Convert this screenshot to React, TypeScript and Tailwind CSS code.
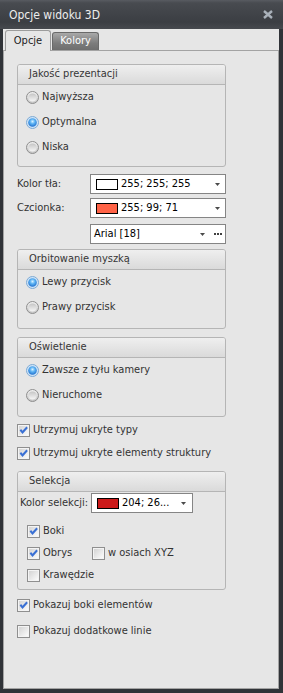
import React, { useId } from "react";

function Radio({ checked }: { checked?: boolean }) {
  const id = useId().replace(/:/g, "");
  if (checked) {
    return (
      <svg width="13" height="13" viewBox="0 0 13 13" className="shrink-0">
        <defs>
          <radialGradient id={`rb${id}`} cx="50%" cy="38%" r="60%">
            <stop offset="0%" stopColor="#d8f1ff" />
            <stop offset="45%" stopColor="#5db3f3" />
            <stop offset="100%" stopColor="#2473d0" />
          </radialGradient>
        </defs>
        <circle cx="6.5" cy="6.5" r="6" fill="#cfe5f8" stroke="#7ea9d3" />
        <circle cx="6.5" cy="6.5" r="4.3" fill={`url(#rb${id})`} />
      </svg>
    );
  }
  return (
    <svg width="13" height="13" viewBox="0 0 13 13" className="shrink-0">
      <defs>
        <linearGradient id={`ro${id}`} x1="0" y1="0" x2="0" y2="1">
          <stop offset="0%" stopColor="#f2f2f2" />
          <stop offset="100%" stopColor="#c4c4c4" />
        </linearGradient>
        <linearGradient id={`ri${id}`} x1="0" y1="0" x2="0" y2="1">
          <stop offset="0%" stopColor="#c6c6c6" />
          <stop offset="100%" stopColor="#f6f6f6" />
        </linearGradient>
      </defs>
      <circle cx="6.5" cy="6.5" r="6" fill={`url(#ro${id})`} stroke="#8e8e8e" />
      <circle cx="6.5" cy="6.5" r="4" fill={`url(#ri${id})`} />
    </svg>
  );
}

function Check({ checked }: { checked?: boolean }) {
  const id = useId().replace(/:/g, "");
  return (
    <svg width="13" height="13" viewBox="0 0 13 13" className="shrink-0">
      <defs>
        <linearGradient id={`cb${id}`} x1="0" y1="0" x2="1" y2="1">
          <stop offset="0%" stopColor="#d4d4d4" />
          <stop offset="100%" stopColor="#fbfbfb" />
        </linearGradient>
      </defs>
      <rect x="0.5" y="0.5" width="12" height="12" fill="#f4f4f4" stroke="#8f8f8f" />
      <rect x="2" y="2" width="9" height="9" fill={`url(#cb${id})`} />
      {checked && (
        <path d="M2.6 6.4 L4.1 5 L5.5 6.7 L9.4 2.6 L10.9 4 L5.5 9.9 Z" fill="#3a70d4" />
      )}
    </svg>
  );
}

function Arrow() {
  return (
    <svg width="5" height="3" viewBox="0 0 5 3" className="shrink-0">
      <polygon points="0,0 5,0 2.5,3" fill="#4a4a4a" />
    </svg>
  );
}

function Group({
  title,
  bodyClass,
  children,
  className,
}: {
  title: string;
  bodyClass: string;
  children: React.ReactNode;
  className: string;
}) {
  return (
    <div className={`ml-[13px] w-[209px] border border-[#b5b5b5] rounded-[3px] ${className}`}>
      <div className="h-[20px] border-b border-[#b5b5b5] rounded-t-[2px] bg-[linear-gradient(#efefef,#dadada)] flex items-center pl-[11px] text-[#363636]">
        {title}
      </div>
      <div className={bodyClass}>{children}</div>
    </div>
  );
}

function RadioRow({ label, checked, h }: { label: string; checked?: boolean; h: string }) {
  return (
    <div className={`flex items-center pl-[8px] gap-[3px] ${h}`}>
      <Radio checked={checked} />
      <span>{label}</span>
    </div>
  );
}

export default function App() {
  return (
    <div className="w-[283px] h-[693px] bg-[#303338] flex flex-col font-['DejaVu_Sans_Condensed','DejaVu_Sans','Liberation_Sans',sans-serif] text-[11px] text-[#333333] overflow-hidden">
      <div className="h-[29px] shrink-0 flex items-center justify-between pl-[9px] pr-[10px] bg-[linear-gradient(#585b61_0px,#484b50_3px,#3b3e43_22px,#46494e_29px)]">
        <span className="text-[12px] text-[#ededed]">Opcje widoku 3D</span>
        <svg width="10" height="9" viewBox="0 0 10 9">
          <path d="M1 1 L9 8 M9 1 L1 8" stroke="#a9b1ba" strokeWidth="2.4" />
        </svg>
      </div>
      <div className="flex-1 ml-[3px] mr-[4px] mb-[4px] bg-[#e6e6e6] flex flex-col">
        <div className="h-[21px] shrink-0 flex items-end pl-[2px] gap-[1px]">
          <div className="relative z-10 -mb-px h-[21px] w-[46px] border border-b-0 border-[#9c9c9c] rounded-t-[3px] bg-[#e6e6e6] flex items-center justify-center text-[#222]">
            Opcje
          </div>
          <div className="h-[18px] w-[47px] border border-b-0 border-[#6a6a6a] rounded-t-[3px] bg-[linear-gradient(#a9a9a9,#7c7c7c_60%,#6e6e6e)] flex items-center justify-center text-white">
            Kolory
          </div>
        </div>
        <div className="flex-1 border border-[#a3a3a3] flex flex-col">
          <Group title="Jakość prezentacji" className="mt-[13px]" bodyClass="pb-[6px]">
            <RadioRow label="Najwyższa" h="h-[25px]" />
            <RadioRow label="Optymalna" checked h="h-[25px]" />
            <RadioRow label="Niska" h="h-[25px]" />
          </Group>

          <div className="mt-[7px] ml-[13px] flex items-center h-[20px]">
            <span className="w-[73px]">Kolor tła:</span>
            <div className="w-[136px] h-[20px] border border-[#858585] bg-white flex items-center pl-[5px] pr-[5px]">
              <span className="w-[22px] h-[11px] border border-black bg-white shrink-0" />
              <span className="ml-[3px] flex-1 text-black">255; 255; 255</span>
              <Arrow />
            </div>
          </div>
          <div className="mt-[4px] ml-[13px] flex items-center h-[20px]">
            <span className="w-[73px]">Czcionka:</span>
            <div className="w-[136px] h-[20px] border border-[#858585] bg-white flex items-center pl-[5px] pr-[5px]">
              <span className="w-[22px] h-[11px] border border-black bg-[#ff6347] shrink-0" />
              <span className="ml-[3px] flex-1 text-black">255; 99; 71</span>
              <Arrow />
            </div>
          </div>
          <div className="mt-[6px] ml-[86px] w-[136px] h-[20px] border border-[#858585] bg-white flex items-center pl-[3px] pr-[3px]">
            <span className="flex-1 text-black">Arial [18]</span>
            <Arrow />
            <div className="ml-[9px] flex gap-[1px]">
              <span className="w-[2px] h-[2px] bg-[#404040]" />
              <span className="w-[2px] h-[2px] bg-[#404040]" />
              <span className="w-[2px] h-[2px] bg-[#404040]" />
            </div>
          </div>

          <Group title="Orbitowanie myszką" className="mt-[5px]" bodyClass="pb-[8px]">
            <RadioRow label="Lewy przycisk" checked h="h-[25px]" />
            <RadioRow label="Prawy przycisk" h="h-[25px]" />
          </Group>

          <Group title="Oświetlenie" className="mt-[8px]" bodyClass="pb-[8px]">
            <RadioRow label="Zawsze z tyłu kamery" checked h="h-[25px]" />
            <RadioRow label="Nieruchome" h="h-[25px]" />
          </Group>

          <div className="mt-[2px] ml-[13px] h-[23px] flex items-center gap-[3px]">
            <Check checked />
            <span>Utrzymuj ukryte typy</span>
          </div>
          <div className="ml-[13px] h-[23px] flex items-center gap-[3px]">
            <Check checked />
            <span>Utrzymuj ukryte elementy struktury</span>
          </div>

          <Group title="Selekcja" className="mt-[6px]" bodyClass="pt-[1px] pb-[3px]">
            <div className="flex items-center h-[20px] pl-[2px]">
              <span className="w-[71px]">Kolor selekcji:</span>
              <div className="w-[102px] h-[20px] border border-[#858585] bg-white flex items-center pl-[5px] pr-[6px]">
                <span className="w-[22px] h-[11px] border border-black bg-[#cc1a1a] shrink-0" />
                <span className="ml-[3px] flex-1 text-black">204; 26...</span>
                <Arrow />
              </div>
            </div>
            <div className="mt-[7px]">
              <div className="h-[22px] flex items-center pl-[9px] gap-[3px]">
                <Check checked />
                <span>Boki</span>
              </div>
              <div className="h-[22px] flex items-center pl-[9px]">
                <div className="w-[65px] flex items-center gap-[3px]">
                  <Check checked />
                  <span>Obrys</span>
                </div>
                <div className="flex items-center gap-[3px]">
                  <Check />
                  <span>w osiach XYZ</span>
                </div>
              </div>
              <div className="h-[22px] flex items-center pl-[9px] gap-[3px]">
                <Check />
                <span>Krawędzie</span>
              </div>
            </div>
          </Group>

          <div className="mt-[2px] ml-[13px] h-[26px] flex items-center gap-[3px]">
            <Check checked />
            <span>Pokazuj boki elementów</span>
          </div>
          <div className="ml-[13px] h-[26px] flex items-center gap-[3px]">
            <Check />
            <span>Pokazuj dodatkowe linie</span>
          </div>
        </div>
      </div>
    </div>
  );
}
